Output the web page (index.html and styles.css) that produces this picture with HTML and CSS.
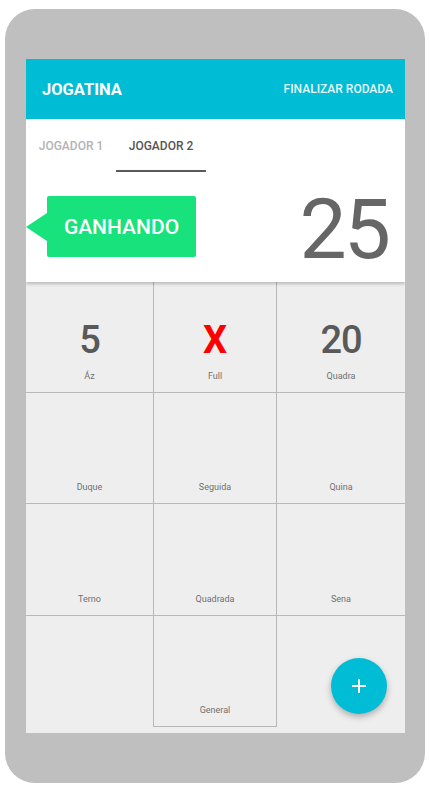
FILE: index.html
```html
<!DOCTYPE html>
<html lang="pt">
<head>
<meta charset="utf-8">
<title>Jogatina</title>
<link rel="stylesheet" href="styles.css">
</head>
<body>
<div class="frame">
  <div class="screen">
    <header class="appbar">
      <div class="title">JOGATINA</div>
      <div class="action">FINALIZAR RODADA</div>
    </header>
    <div class="top">
      <nav class="tabs">
        <div class="tab">JOGADOR 1</div>
        <div class="tab active">JOGADOR 2</div>
      </nav>
      <div class="score-row">
        <div class="badge">GANHANDO</div>
        <div class="score">25</div>
      </div>
    </div>
    <div class="grid">
      <div class="cell"><div class="num">5</div><div class="label">Áz</div></div>
      <div class="cell"><div class="num x">X</div><div class="label">Full</div></div>
      <div class="cell last-col"><div class="num">20</div><div class="label">Quadra</div></div>
      <div class="cell"><div class="label">Duque</div></div>
      <div class="cell"><div class="label">Seguida</div></div>
      <div class="cell last-col"><div class="label">Quina</div></div>
      <div class="cell"><div class="label">Terno</div></div>
      <div class="cell"><div class="label">Quadrada</div></div>
      <div class="cell last-col"><div class="label">Sena</div></div>
      <div class="cell blank"></div>
      <div class="cell"><div class="label">General</div></div>
      <div class="cell blank last-col"></div>
    </div>
    <button class="fab" aria-label="Adicionar">
      <svg width="16" height="16" viewBox="0 0 16 16"><path d="M8 1v14M1 8h14" stroke="#fff" stroke-width="2" fill="none"/></svg>
    </button>
  </div>
</div>
</body>
</html>
```
FILE: styles.css
```css
* { box-sizing: border-box; }
html, body { margin: 0; padding: 0; background: #fff; }
body { font-family: Roboto, "Noto Sans", sans-serif; }

.frame {
  margin: 9px 0 0 5px;
  width: 420px;
  height: 774px;
  background: #bfbfbf;
  border-radius: 30px;
  padding: 50px 20px 50px 21px;
}

.screen {
  position: relative;
  height: 674px;
  background: #eeeeee;
  display: flex;
  flex-direction: column;
  overflow: hidden;
}

.appbar {
  height: 60px;
  flex: none;
  background: #00bcd4;
  display: flex;
  align-items: center;
  justify-content: space-between;
  padding: 0 12px 0 16px;
  color: #fff;
}
.title { font-size: 16.5px; font-weight: 700; letter-spacing: 0; }
.action { font-size: 12px; font-weight: 500; color: rgba(255,255,255,0.92); }

.top {
  position: relative;
  z-index: 1;
  background: #fff;
  box-shadow: 0 2px 3px rgba(0,0,0,0.22);
  flex: none;
}

.tabs { display: flex; height: 53px; }
.tab {
  width: 90px;
  display: flex;
  align-items: center;
  justify-content: center;
  font-size: 12px;
  font-weight: 500;
  color: #b3b3b3;
  border-bottom: 2px solid transparent;
  padding-top: 2px;
}
.tab.active { color: #555; border-bottom-color: #5a5a5a; }

.score-row {
  height: 110px;
  display: flex;
  align-items: center;
  justify-content: space-between;
  padding: 0 17px 0 21px;
}
.badge {
  position: relative;
  height: 61px;
  width: 149px;
  margin-top: -1px;
  background: #17e27b;
  border-radius: 2px;
  color: #fff;
  font-size: 21px;
  font-weight: 500;
  display: flex;
  align-items: center;
  justify-content: center;
  padding-top: 1px;
}
.badge::before {
  content: "";
  position: absolute;
  left: -21px;
  top: 17px;
  border-style: solid;
  border-width: 14px 21px 14px 0;
  border-color: transparent #17e27b transparent transparent;
}
.score {
  font-size: 84px;
  line-height: 1;
  font-weight: 400;
  letter-spacing: -3px;
  color: #666;
  margin-top: 6px;
}

.grid {
  flex: none;
  display: grid;
  grid-template-columns: 128px 123px 1fr;
  grid-template-rows: 111px 111px 112px 111px;
}
.cell {
  border-right: 1px solid #b8b8b8;
  border-bottom: 1px solid #b8b8b8;
  display: flex;
  flex-direction: column;
  align-items: center;
  justify-content: flex-end;
  padding-bottom: 10px;
}
.cell.last-col { border-right: none; }
.cell.blank { border-bottom: none; }
.cell.blank.last-col { border-right: none; }

.num {
  font-size: 38px;
  line-height: 40px;
  font-weight: 500;
  letter-spacing: -1px;
  color: #595959;
  margin-bottom: 10px;
}
.num.x { color: #ff0000; font-weight: 700; letter-spacing: 0; }
.label {
  font-size: 9px;
  line-height: 12px;
  color: #707070;
}

.fab {
  position: absolute;
  right: 18px;
  bottom: 19px;
  width: 56px;
  height: 56px;
  border-radius: 50%;
  border: none;
  background: #00bcd4;
  box-shadow: 0 3px 6px rgba(0,0,0,0.28);
  display: flex;
  align-items: center;
  justify-content: center;
  padding: 0;
}
.fab svg { display: block; }
```
